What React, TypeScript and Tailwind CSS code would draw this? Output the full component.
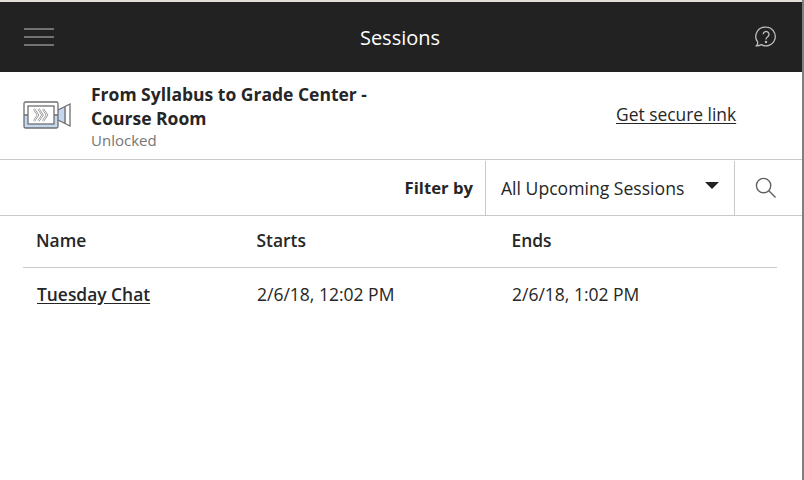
export default function App() {
  return (
    <div className="w-[804px] h-[480px] overflow-hidden bg-white flex flex-col font-['Open_Sans',sans-serif] text-[#262626] border-r-2 border-r-[#7d827d]">
      <div className="h-[2px] bg-[#e5dfda] shrink-0" />
      <div className="flex flex-col">
        <header className="h-[70px] shrink-0 bg-[#222222] grid grid-cols-[1fr_auto_1fr] items-center pl-6 pr-[25px]">
          <svg width="30" height="18" viewBox="0 0 30 18" fill="none" stroke="#c4c4c4" strokeWidth="1.200" className="mt-[-1px]">
            <path d="M0 1H30M0 9H30M0 17H30" />
          </svg>
          <h1 className="text-[20px] leading-[26px] text-white ml-[-1px] mt-[2px]">Sessions</h1>
          <svg width="22" height="22" viewBox="0 0 22 22" fill="none" stroke="#bdbdbd" strokeWidth="1.300" className="justify-self-end">
            <path d="M11 1.200a9.300 9.300 0 1 1-4.600 17.400c-1.500.8-3.200 1.300-5 1.200 1-1 1.500-2.200 1.400-3.600A9.300 9.300 0 0 1 11 1.200Z" />
            <path d="M8.200 8.300a2.900 2.900 0 1 1 4.500 2.500c-1.100.7-1.700 1.300-1.700 2.700" />
            <circle cx="11" cy="16" r=".6" fill="#bdbdbd" />
          </svg>
        </header>
        <section className="h-[88px] shrink-0 flex items-center border-b border-[#c9c9c9] pl-[23px]">
          <svg width="48" height="28" viewBox="0 0 48 28" fill="none" className="shrink-0 mr-5 mt-[-1px]">
            <rect x="1" y="1" width="34" height="26" rx="1.500" fill="#fff" />
            <path d="M1 14H35V26a1 1 0 0 1-1 1H2a1 1 0 0 1-1-1Z" fill="#c5d7ef" />
            <path d="M35 9L43 5V23L35 19Z" fill="#c5d7ef" />
            <rect x="1" y="1" width="34" height="26" rx="1.500" stroke="#6f6f6f" strokeWidth="1.300" />
            <rect x="5" y="5" width="26" height="18" fill="#fff" stroke="#6f6f6f" strokeWidth="1.300" />
            <path d="M1 14H5M31 14H35M35 9L47 3V25L35 19M42 5.500V22.500" stroke="#6f6f6f" strokeWidth="1.300" />
            <path d="M11 8L15 14L11 20M15.500 8L19.500 14L15.500 20M20 8L24 14L20 20" stroke="#8a8a8a" strokeWidth="2.200" />
            <path d="M11 8L15 14L11 20M15.500 8L19.500 14L15.500 20M20 8L24 14L20 20" stroke="#fff" strokeWidth="0.900" />
          </svg>
          <div className="w-[300px] shrink-0 mt-[1px]">
            <div className="text-[17.500px] leading-[24px] font-bold">From Syllabus to Grade Center - Course Room</div>
            <div className="text-[15px] leading-[20px] text-[#767676]">Unlocked</div>
          </div>
          <a className="ml-[225px] text-[17.400px] leading-[24px] underline underline-offset-2 mt-[-3px]">Get secure link</a>
        </section>
        <section className="h-[56px] shrink-0 flex items-center justify-end border-b border-[#c9c9c9]">
          <span className="text-[16.700px] font-bold mr-3">Filter by</span>
          <div className="w-[250px] h-[54px] flex items-center justify-between border-l border-r border-[#c9c9c9] pl-[15px] pr-[15px]">
            <span className="text-[17.600px] leading-[24px]">All Upcoming Sessions</span>
            <span className="w-0 h-0 border-l-[7px] border-r-[7px] border-t-[7px] border-l-transparent border-r-transparent border-t-[#222222] mb-1" />
          </div>
          <div className="w-[67px] flex items-center pl-[21px]">
            <svg width="21" height="21" viewBox="0 0 22 22" fill="none" stroke="#5f5f5f" strokeWidth="1.400" className="ml-[-1px]">
              <circle cx="9" cy="9" r="7.500" />
              <path d="M14.500 14.500L21.500 21.500" />
            </svg>
          </div>
        </section>
        <div className="ml-[23px] mr-[25px] flex items-center h-[52px] border-b border-[#c9c9c9] text-[17.400px] font-semibold pl-[13px]">
          <span className="w-[220.500px] mt-[-2px]">Name</span>
          <span className="w-[255px] mt-[-2px]">Starts</span>
          <span className="mt-[-2px]">Ends</span>
        </div>
        <div className="ml-[23px] mr-[25px] flex items-center h-[52px] text-[17.500px] pl-[14px]">
          <a className="w-[220px] text-[17.400px] font-semibold underline underline-offset-2 mt-[2px] h-[26px] leading-[24px]">Tuesday Chat</a>
          <span className="w-[255px]">2/6/18, 12:02 PM</span>
          <span>2/6/18, 1:02 PM</span>
        </div>
      </div>
    </div>
  );
}
